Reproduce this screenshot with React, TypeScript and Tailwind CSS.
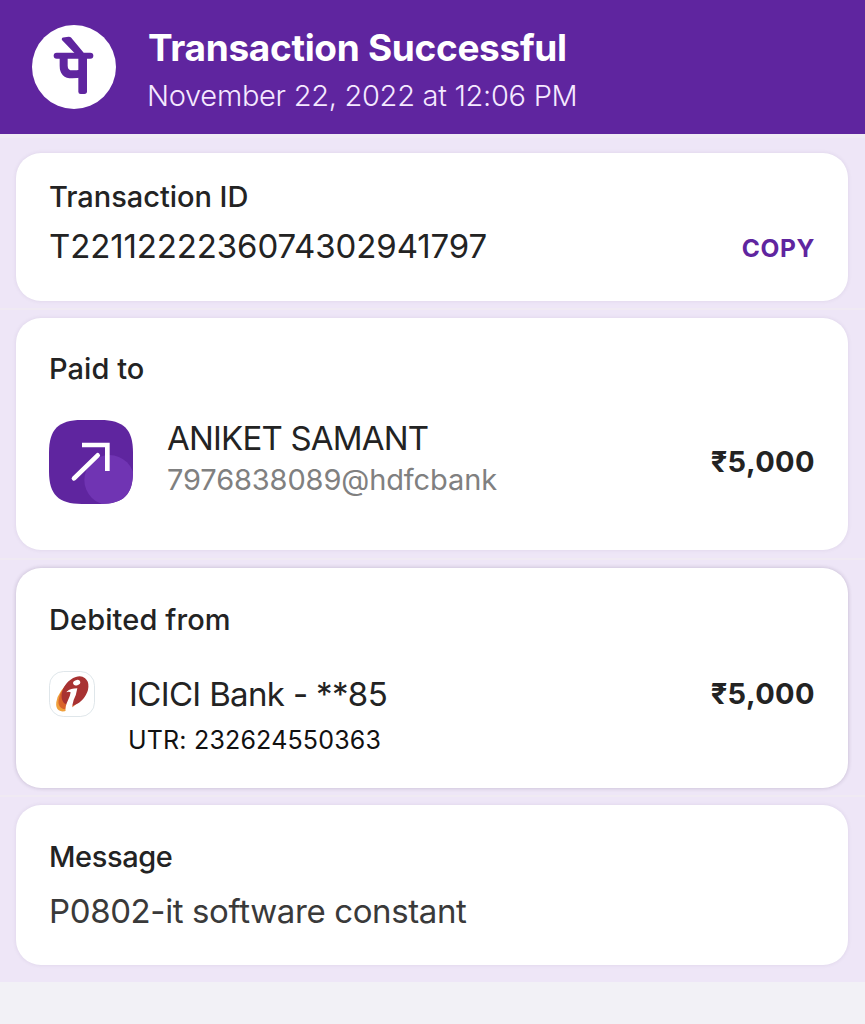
import type { ReactNode } from "react";

function PhonePeLogo() {
  return (
    <svg viewBox="36 30 252 252" className="size-[84px] shrink-0" aria-hidden="true">
      <circle cx="162" cy="156" r="126" fill="#fff" />
      <g fill="none" stroke="#5f259f" strokeLinejoin="round">
        <path d="M130 70 L146 68 Q150 68 153 71 L188 113 H166 L129 75 Q126 72 130 70 Z" fill="#5f259f" strokeWidth="5" />
        <path d="M110 122 H211" strokeWidth="18" strokeLinecap="round" />
        <path d="M131 122 V152 Q131 178 157 178 Q170 178 187 175" strokeWidth="24" />
      </g>
      <path d="M175 118 H201 V229 Q201 237 193 237 H182 Q175 237 175 230 Z" fill="#5f259f" />
    </svg>
  );
}

function TransferIcon() {
  return (
    <svg viewBox="27 30 252 252" className="size-[84px] shrink-0" aria-hidden="true">
      <defs>
        <clipPath id="tile">
          <path d="M27 128 C27 58 55 30 125 30 H181 C251 30 279 58 279 128 V184 C279 254 251 282 181 282 H125 C55 282 27 254 27 184 Z" />
        </clipPath>
      </defs>
      <g clipPath="url(#tile)">
        <rect x="27" y="30" width="252" height="252" fill="#5f259f" />
        <circle cx="208" cy="210" r="75" fill="#7034b3" />
      </g>
      <g fill="none" stroke="#fff" strokeWidth="14">
        <path d="M126 105 H202 V183" strokeLinejoin="miter" />
        <path d="M102 205 L173 136" strokeLinecap="round" />
      </g>
    </svg>
  );
}

function IciciLogo() {
  return (
    <svg viewBox="27 32 138 138" className="size-[46px] shrink-0" aria-hidden="true">
      <rect x="28.5" y="33.5" width="135" height="135" rx="42" fill="#fff" stroke="#d9e1e6" strokeWidth="2.5" />
      <ellipse cx="87" cy="108" rx="29" ry="52" transform="rotate(36 87 108)" fill="#f0a03c" />
      <ellipse cx="94" cy="102" rx="30" ry="51" transform="rotate(36 94 102)" fill="#d9622b" />
      <ellipse cx="105" cy="92" rx="34" ry="49" transform="rotate(38 105 92)" fill="#a83232" />
      <path d="M80 94 Q92 84 112 84 Q109 104 101 119 Q96 132 97 149 L77 154 Q74 140 84 120 Q91 105 92 96 Q86 93 80 96 Z" fill="#fff" />
      <ellipse cx="110" cy="67" rx="11" ry="8" transform="rotate(-18 110 67)" fill="#fff" />
    </svg>
  );
}

function Row({ className, children }: { className: string; children: ReactNode }) {
  return <div className={`border-b-2 border-[#f0eaf3] pl-4 pr-[17px] ${className}`}>{children}</div>;
}

function Card({ className, children }: { className: string; children: ReactNode }) {
  return <section className={`rounded-[25px] bg-white px-[33px] ${className}`}>{children}</section>;
}

const soft = "shadow-[0_0_4px_rgba(60,30,90,0.09)]";
const strong = "shadow-[0_0_4px_rgba(40,20,70,0.22)]";

export default function App() {
  return (
    <div className="flex min-h-screen w-full flex-col bg-[#f2f1f6] font-[Inter,sans-serif] whitespace-nowrap text-[#232323]">
      <header className="flex h-[134px] items-start gap-8 bg-[#5f259f] pl-8 pt-[25px] text-white">
        <PhonePeLogo />
        <div>
          <h1 className="text-[37px] leading-[46px] font-bold tracking-[-0.32px]">Transaction Successful</h1>
          <p className="-ml-px mt-0.5 text-[29px] leading-[46px] font-light tracking-[-0.28px] text-[#f5e9ff]">
            November 22, 2022 at 12:06 PM
          </p>
        </div>
      </header>

      <main className="bg-[#eee6f7]">
        <Row className="h-[176px] border-t-4 border-t-[#f0eaf5] pt-[15px]">
          <Card className={`h-[148px] pt-[23px] ${soft}`}>
            <h2 className="text-[29px] leading-[42px] font-medium tracking-[-0.03px]">Transaction ID</h2>
            <div className="mt-[5px] flex items-start justify-between">
              <p className="text-[33px] leading-[46px] tracking-[-0.12px]">T2211222236074302941797</p>
              <button className="mt-1 text-[24.5px] leading-[42px] font-bold tracking-[0.6px] text-[#5f259f]">
                COPY
              </button>
            </div>
          </Card>
        </Row>

        <Row className="h-[250px] pt-2">
          <Card className={`h-[232px] pt-[30px] ${soft}`}>
            <h2 className="text-[29px] leading-[42px] font-medium tracking-[0.05px]">Paid to</h2>
            <div className="mt-[30px] flex items-center">
              <TransferIcon />
              <div className="-mt-1.5 ml-[34px] flex-1">
                <p className="text-[33px] leading-[42px] tracking-[-0.8px]">ANIKET SAMANT</p>
                <p className="text-[29px] leading-[42px] tracking-[-0.12px] text-[#808080]">7976838089@hdfcbank</p>
              </div>
              <p className="text-[29px] leading-[42px] font-bold tracking-[0.4px]">₹5,000</p>
            </div>
          </Card>
        </Row>

        <Row className="h-[237px] pt-2">
          <Card className={`h-[220px] pt-[31px] ${strong}`}>
            <h2 className="text-[29px] leading-[42px] font-medium tracking-[0.1px]">Debited from</h2>
            <div className="mt-[30px] flex items-center">
              <IciciLogo />
              <p className="ml-[34px] flex-1 text-[33px] leading-[46px] tracking-[-0.65px]">ICICI Bank - **85</p>
              <p className="text-[29px] leading-[46px] font-bold tracking-[0.4px]">₹5,000</p>
            </div>
            <p className="ml-[79px] mt-[5px] text-[25px] leading-[37px] tracking-[0.18px] text-[#111]">UTR: 232624550363</p>
          </Card>
        </Row>

        <div className="h-[185px] pl-4 pr-[17px] pt-2">
          <Card className={`h-[160px] pt-[31px] ${soft}`}>
            <h2 className="text-[29px] leading-[41px] font-medium tracking-[-0.4px]">Message</h2>
            <p className="mt-[11px] text-[33px] leading-[46px] tracking-[-0.38px] text-[#3a3a3a]">
              P0802-it software constant
            </p>
          </Card>
        </div>
      </main>
    </div>
  );
}
